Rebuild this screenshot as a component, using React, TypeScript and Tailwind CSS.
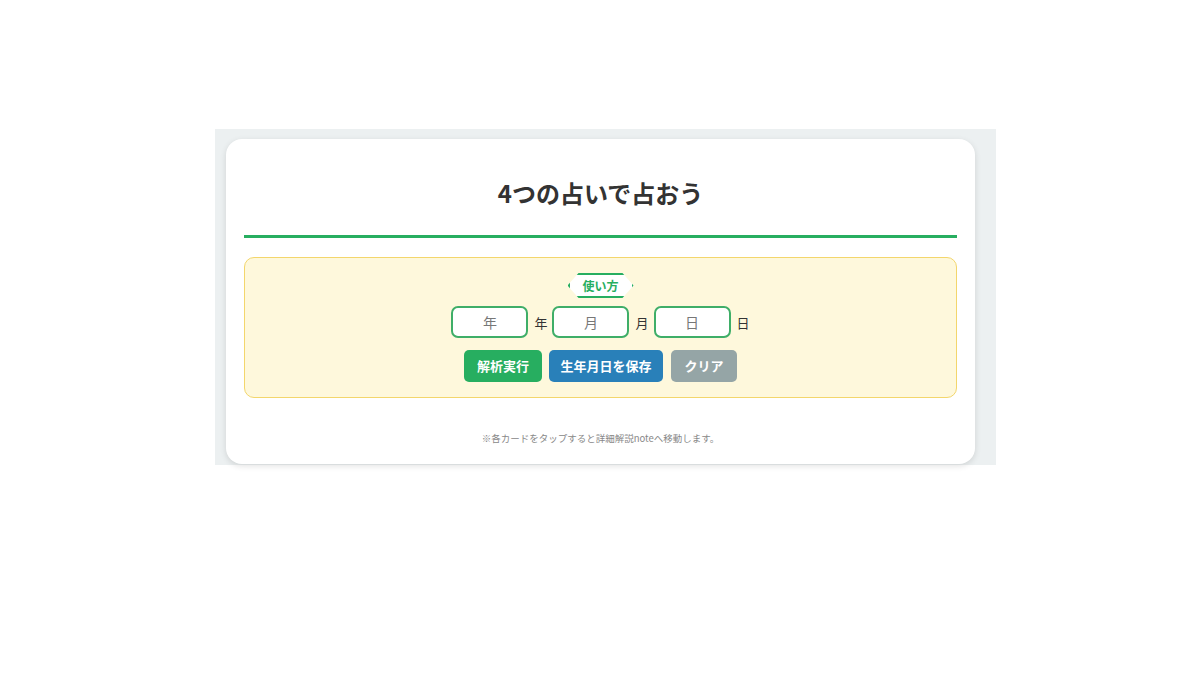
import React from 'react'

const font = { fontFamily: '"Noto Sans CJK JP", "Noto Sans", sans-serif' }

function DateField({ placeholder, unit }: { placeholder: string; unit: string }) {
  return (
    <div className="flex items-center gap-[6px]">
      <input
        type="text"
        placeholder={placeholder}
        className="w-[77px] h-[32px] rounded-[7px] border-2 border-[#3fae68] bg-white text-center text-[14px] text-[#333] placeholder:text-[#777] outline-none"
      />
      <span className="text-[13px] text-[#333] mt-[1px]">{unit}</span>
    </div>
  )
}

export default function App() {
  return (
    <div className="min-h-[675px] bg-white pt-[129px] pl-[215px]" style={font}>
      <div className="w-[781px] bg-[#ecf0f1] pt-[10px] pl-[11px] pb-[1px]">
        <div className="w-[749px] rounded-2xl bg-white px-[18px] pt-[36px] pb-[18px] shadow-[0_2px_6px_rgba(0,0,0,0.12)]">
          {/* 見出し */}
          <h1 className="text-center text-[24px] font-bold leading-[36px] text-[#333]">4つの占いで占おう</h1>
          <div className="mt-[24px] h-[3px] bg-[#27ae60]" />

          {/* 生年月日入力 */}
          <div className="mt-[19px] flex flex-col items-center rounded-[10px] border border-[#f3d66c] bg-[#fef8dc] pt-[15px] pb-[15px]">
            <div className="flex h-[25px] w-[66px] items-center justify-center border-2 border-[#27ae60] bg-white text-[12px] font-bold text-[#27ae60] [clip-path:polygon(11px_0,calc(100%-11px)_0,100%_50%,calc(100%-11px)_100%,11px_100%,0_50%)]">
              使い方
            </div>
            <div className="mt-[8px] flex items-center gap-[5px]">
              <DateField placeholder="年" unit="年" />
              <DateField placeholder="月" unit="月" />
              <DateField placeholder="日" unit="日" />
            </div>
            <div className="mt-[12px] flex items-center gap-[7px]">
              <button className="h-[32px] w-[78px] rounded-[5px] bg-[#27ae60] text-[13px] font-bold text-white">解析実行</button>
              <button className="h-[32px] w-[114px] rounded-[5px] bg-[#2980b9] text-[13px] font-bold text-white">生年月日を保存</button>
              <button className="ml-[1px] h-[32px] w-[66px] rounded-[5px] bg-[#95a5a6] text-[13px] font-bold text-white">クリア</button>
            </div>
          </div>

          <p className="mt-[32px] text-center text-[9.5px] leading-[16px] text-[#888]">
            ※各カードをタップすると詳細解説noteへ移動します。
          </p>
        </div>
      </div>
    </div>
  )
}
